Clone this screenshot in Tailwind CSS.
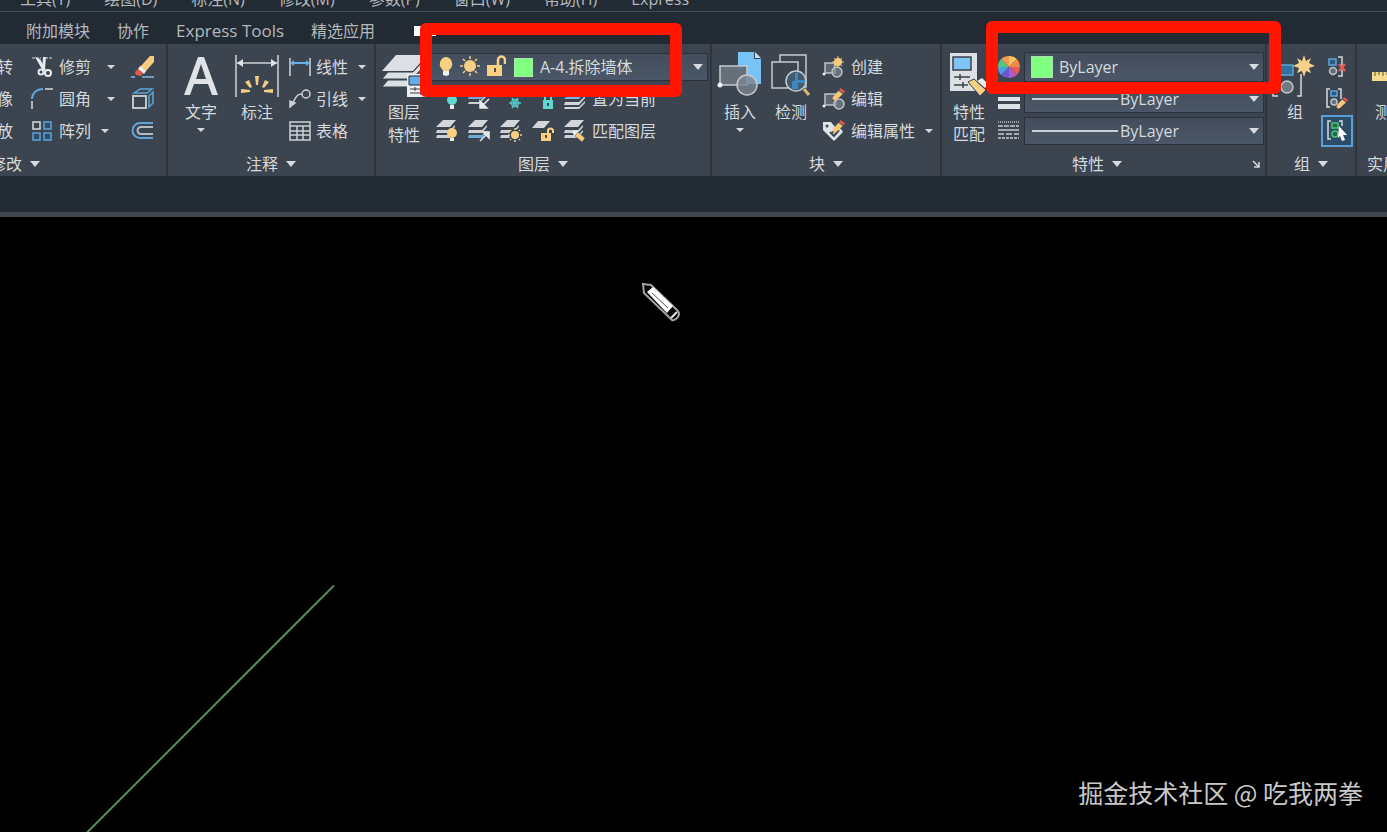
<!DOCTYPE html>
<html lang="zh-CN">
<head>
<meta charset="utf-8">
<meta name="viewport" content="width=device-width, initial-scale=1">
<title>CAD</title>
<script src="https://cdn.jsdelivr.net/npm/@tailwindcss/browser@4"></script>
</head>
<body class="flex h-screen flex-col overflow-hidden bg-black font-['Open_Sans','Noto_Sans_CJK_SC',sans-serif] text-[16px] leading-6 text-[#d6dade]">

<svg class="hidden" aria-hidden="true">
  <symbol id="down" viewBox="0 0 8 4"><path d="M0 0h8L4 4z" fill="#d6dade"/></symbol>
  <symbol id="sheets" viewBox="0 0 24 24">
    <path d="M8 1h13l-6 7H1z" fill="#d3d6da"/>
    <path d="M2 11h13l5-5v2l-5 6H1z" fill="#cdd1d6"/>
    <path d="M2 16h13l5-5v2l-5 6H1z" fill="#cdd1d6"/>
  </symbol>
  <symbol id="sheets-blue" viewBox="0 0 24 24">
    <path d="M8 1h13l-6 7H1z" fill="#d3d6da"/>
    <path d="M2 11h13l5-5v2l-5 6H1z" fill="#cdd1d6"/>
    <path d="M2 16h13l5-5v2l-5 6H1z" fill="#6fa9d8"/>
  </symbol>
  <symbol id="pencil" viewBox="0 0 12 12">
    <path d="M8 0l4 3-1.500 2-4-3z" fill="#e0574b"/><path d="M6 2.500l4 3L4 11 0 12l1-4z" fill="#f4c877"/><path d="M0 12l.5-2 1.500 1.500z" fill="#333"/>
  </symbol>
</svg>

<nav aria-label="菜单" class="flex h-3 shrink-0 items-end gap-[34px] overflow-hidden border-b border-[#414a53] bg-[#222a33] pl-5 whitespace-nowrap text-[#b4b9be]">
  <a href="#">工具(T)</a><a href="#">绘图(D)</a><a href="#">标注(N)</a><a href="#">修改(M)</a><a href="#">参数(P)</a><a href="#">窗口(W)</a><a href="#">帮助(H)</a><a href="#">Express</a>
</nav>

<nav aria-label="功能区选项卡" class="flex h-8 shrink-0 items-center gap-[27px] overflow-hidden bg-[#222a33] pt-1.5 pl-[26px] whitespace-nowrap text-[#b4b9be]">
  <a href="#">附加模块</a><a href="#">协作</a><a href="#" class="text-[17px]">Express Tools</a><a href="#">精选应用</a>
  <button aria-label="最小化功能区" class="ml-3 h-2.5 w-[22px] bg-white"></button>
</nav>

<main class="flex min-h-0 flex-1 flex-col">
<div class="flex h-[132px] shrink-0 overflow-hidden bg-[#3b444f] whitespace-nowrap">

  <section class="flex w-[168px] shrink-0 flex-col border-r-2 border-[#2e353f] pt-[7px]">
    <div class="flex">
      <div class="flex w-[13px] flex-col items-end overflow-hidden *:h-8">
        <button>旋转</button><button>镜像</button><button>缩放</button>
      </div>
      <div class="ml-[18px] flex flex-col">
        <div class="flex h-8 items-center">
          <button class="flex items-center gap-1"><svg class="size-6" viewBox="0 0 24 24" fill="none"><path d="M1 3h9M14 3h8" stroke="#d6dade" stroke-dasharray="3 1"/><path d="M4 2l5 2 6 11-3 1z" fill="#e8ebee"/><path d="M12 2h3l-1 12-3 2z" fill="#e8ebee"/><circle cx="10" cy="17" r="2.500" stroke="#e8ebee" stroke-width="2"/><circle cx="17" cy="18" r="3" stroke="#e8ebee" stroke-width="2"/></svg>修剪</button>
          <button aria-label="修剪选项" class="ml-4"><svg class="h-1 w-2"><use href="#down"/></svg></button>
        </div>
        <div class="flex h-8 items-center">
          <button class="flex items-center gap-1"><svg class="size-6" viewBox="0 0 24 24" fill="none"><path d="M1 12C1 6 6 2 12 2" stroke="#5fa4d8" stroke-width="2"/><path d="M14 2h8M1 14v8" stroke="#d6dade" stroke-width="1.500"/></svg>圆角</button>
          <button aria-label="圆角选项" class="ml-4"><svg class="h-1 w-2"><use href="#down"/></svg></button>
        </div>
        <div class="flex h-8 items-center">
          <button class="flex items-center gap-1"><svg class="size-6" viewBox="0 0 24 24" fill="none" stroke-width="1.500"><path d="M2 3h7v7H2z" stroke="#d6dade"/><path d="M13 3h7v7h-7zM2 14h7v7H2zM13 14h7v7h-7z" stroke="#5fa4d8" fill="#2d4d68"/></svg>阵列</button>
          <button aria-label="阵列选项" class="ml-2.5"><svg class="h-1 w-2"><use href="#down"/></svg></button>
        </div>
      </div>
      <div class="ml-4 flex flex-col *:flex *:h-8 *:items-center">
        <button aria-label="删除"><svg class="size-6" viewBox="0 0 24 24"><path d="M23 1v6L14 17l-5-5L19 1z" fill="#f6cd7e"/><path d="M9 11l6 5-2 3-6-5z" fill="#eceef0"/><path d="M7 14l5 4-2 3-5-1-1-3z" fill="#e05a4b"/><path d="M0 22h4M11 22h12" stroke="#8dbbe0" stroke-width="1.500"/></svg></button>
        <button aria-label="分解"><svg class="size-6" viewBox="0 0 24 24" fill="none" stroke-width="2"><path d="M2 9h13v12H2z" stroke="#bfc4ca"/><path d="M3 6l6-4h12l-5 4zM18 9l4-4v11l-4 4z" stroke="#5fa4d8" stroke-width="1.500"/></svg></button>
        <button aria-label="偏移"><svg class="size-6" viewBox="0 0 24 24" fill="none" stroke-width="2"><path d="M22 4H9a7.500 7.500 0 0 0 0 15h13" stroke="#5fa4d8"/><path d="M22 8H10a3.500 3.500 0 0 0 0 7h12" stroke="#b4bcc6"/></svg></button>
      </div>
    </div>
    <button class="flex h-[29px] items-center gap-2 pt-1"><span class="flex w-[22px] justify-end overflow-hidden">修改</span><svg class="h-1.5 w-2.5" viewBox="0 0 8 4" preserveAspectRatio="none"><path d="M0 0h8L4 4z" fill="#d6dade"/></svg></button>
  </section>

  <section class="flex w-52 shrink-0 flex-col border-r-2 border-[#2e353f] pt-[7px]">
    <div class="flex h-24">
      <button class="ml-[9px] flex w-12 flex-col items-center"><svg class="h-[49px] w-12" viewBox="0 0 48 49"><path d="M7 44L21 6h6l14 38h-6l-4-11H17l-4 11zM19 28h10L24 13z" fill="#dfe2e6" fill-rule="evenodd"/></svg>文字<svg class="mt-1 h-1 w-2"><use href="#down"/></svg></button>
      <button class="ml-2 flex w-12 flex-col items-center"><svg class="h-[49px] w-12" viewBox="0 0 48 49"><path d="M3 4v42M45 4v42M4 12h40" stroke="#cdd2d8" stroke-width="1.500"/><path d="M4 12l6-4v8zM44 12l-6-4v8z" fill="#dfe2e6"/><path d="M22 25h4l-1 9h-2zM32 29l4 2-5 6-2-1zM16 29l-4 2 5 6 2-1zM8 38l9 1v2l-9 1zM40 38l-9 1v2l9 1z" fill="#f5cd7f"/></svg>标注</button>
      <div class="ml-[7px] flex flex-col *:flex *:h-8 *:items-center">
        <div><button class="flex items-center gap-1"><svg class="size-6" viewBox="0 0 24 24"><path d="M2 3v18M22 3v18" stroke="#cdd2d8" stroke-width="1.500"/><path d="M3 8h18" stroke="#6aaee4" stroke-width="2"/><path d="M2 8l4-3v6zM22 8l-4-3v6z" fill="#6aaee4"/></svg>线性</button><button aria-label="线性选项" class="ml-2.5"><svg class="h-1 w-2"><use href="#down"/></svg></button></div>
        <div><button class="flex items-center gap-1"><svg class="size-6" viewBox="0 0 24 24" fill="none" stroke="#cdd2d8" stroke-width="1.500"><circle cx="18" cy="7" r="4"/><path d="M14 7C8 7 8 11 4 17"/><path d="M2 20v-6l5 2z" fill="#cdd2d8"/></svg>引线</button><button aria-label="引线选项" class="ml-2.5"><svg class="h-1 w-2"><use href="#down"/></svg></button></div>
        <button class="gap-1"><svg class="size-6" viewBox="0 0 24 24" fill="none" stroke="#cdd2d8" stroke-width="1.500"><path d="M2 3h20v18H2zM2 7h20M2 12h20M2 16h20M9 7v14M15 7v14"/></svg>表格</button>
      </div>
    </div>
    <button class="flex h-[29px] items-center justify-center gap-2 pt-1">注释<svg class="h-1.5 w-2.5" viewBox="0 0 8 4" preserveAspectRatio="none"><path d="M0 0h8L4 4z" fill="#d6dade"/></svg></button>
  </section>

  <section class="flex w-[336px] shrink-0 flex-col border-r-2 border-[#2e353f] pt-[7px]">
    <div class="flex h-24">
      <button class="ml-1 flex w-12 flex-col items-center leading-[23px]"><svg class="h-[50px] w-12" viewBox="0 0 48 50"><path d="M16 4h31L33 20H2z" fill="#dcdfe3"/><path d="M8 21h25l13-14v6L32 28H2z" fill="#dcdfe3" stroke="#3b444f"/><path d="M8 29h25l13-14v6L32 36H2z" fill="#dcdfe3" stroke="#3b444f"/><path d="M27 23h20v23H27z" fill="#eceef0"/><path d="M29 25h18v9H29z" fill="#62ade9" stroke="#222a33"/><path d="M30 38h15M30 42h15M35 36v4M41 40v4" stroke="#39424d"/></svg>图层<br>特性</button>
      <div class="ml-[3px] flex flex-col">
        <div class="flex h-8 items-center">
          <div class="flex h-7 w-[277px] items-center border border-[#2b323b] bg-linear-to-b from-[#434d5c] to-[#4b5768] pr-1 pl-1.5">
            <svg class="h-6 w-4" viewBox="0 0 16 24"><path d="M8 2a7 7 0 0 1 4 12l-2 3H6l-2-3A7 7 0 0 1 8 2z" fill="#f8d083"/><path d="M5 16h6v4l-3 1-3-1z" fill="#f1f2f3"/></svg>
            <svg class="ml-1.5 h-6 w-5" viewBox="0 0 20 24"><circle cx="10" cy="11" r="6" fill="#f8d083"/><path d="M10 1v3M10 18v3M0 11h3M17 11h3M3 4l2 2M15 16l2 2M17 4l-2 2M5 16l-2 2" stroke="#f8d083" stroke-width="1.500"/></svg>
            <svg class="ml-1.5 h-6 w-5" viewBox="0 0 20 24"><path d="M1 10h15v11H1z" fill="#f8d083"/><path d="M12 10V5a3 3 0 0 1 7 0v4" fill="none" stroke="#f8d083" stroke-width="2.500"/><path d="M8 13h2v4H8z" fill="#584c36"/></svg>
            <span class="ml-2 size-[19px] border border-[#a5eaa5] bg-[#80ff80]"></span>
            <select aria-label="图层" class="ml-[7px] min-w-0 flex-1 appearance-none bg-transparent leading-6 outline-none"><option>A-4.拆除墙体</option></select>
            <svg class="h-1.5 w-2.5 shrink-0" viewBox="0 0 8 4" preserveAspectRatio="none"><path d="M0 0h8L4 4z" fill="#d6dade"/></svg>
          </div>
        </div>
        <div class="ml-1 flex h-8 items-center gap-2">
          <button aria-label="关闭图层"><svg class="size-6" viewBox="0 0 24 24"><use href="#sheets" height="12"/><circle cx="17" cy="13" r="5" fill="#61d7d2"/><path d="M15 18h4v4h-4z" fill="#e8ebee"/></svg></button>
          <button aria-label="隔离"><svg class="size-6" viewBox="0 0 24 24"><path d="M2 9h14l5-5v2l-6 6H1z" fill="#6fa9d8"/><path d="M2 15h10l9-9v2l-9 9H1z" fill="#cdd1d6"/><path d="M22 12l-7 7M13 14v7h7z" stroke="#e8ebee" stroke-width="1.500" fill="#e8ebee"/></svg></button>
          <button aria-label="冻结"><svg class="size-6" viewBox="0 0 24 24" stroke="#56c8c5" stroke-width="1.500" fill="none"><path d="M10 16h12M13 11l6 10M19 11l-6 10"/><circle cx="16" cy="16" r="3.500"/></svg></button>
          <button aria-label="锁定"><svg class="size-6" viewBox="0 0 24 24"><path d="M12 13h10v9H12z" fill="#61d7d2"/><path d="M14 13v-3a3 3 0 0 1 6 0v3" fill="none" stroke="#61d7d2" stroke-width="2"/><path d="M16 16h2v3h-2z" fill="#27515a"/></svg></button>
          <button class="flex items-center gap-[5px]"><svg class="size-6" viewBox="0 0 24 24"><path d="M8 6h14l-6 6H1z" fill="#74b5ea"/><path d="M2 15h14l6-6v2l-6 7H1z" fill="#d3d6da"/><path d="M2 20h14l6-6v2l-6 6H1z" fill="#d3d6da"/></svg>置为当前</button>
        </div>
        <div class="ml-1 flex h-8 items-center gap-2">
          <button aria-label="打开所有图层"><svg class="size-6" viewBox="0 0 24 24"><use href="#sheets"/><circle cx="17" cy="14" r="5" fill="#f8d083"/><path d="M15 19h4v3h-4z" fill="#e8ebee"/></svg></button>
          <button aria-label="取消隔离"><svg class="size-6" viewBox="0 0 24 24"><use href="#sheets-blue"/><path d="M13 22l7-7M16 13h6v6z" stroke="#e8ebee" stroke-width="1.500" fill="#e8ebee"/></svg></button>
          <button aria-label="解冻所有图层"><svg class="size-6" viewBox="0 0 24 24"><use href="#sheets"/><circle cx="16" cy="16" r="6" fill="#3b444f"/><circle cx="16" cy="16" r="4" fill="#f8d083"/><path d="M16 9v2M16 21v2M9 16h2M21 16h2M11 11l1 1M20 20l1 1M21 11l-1 1M12 20l-1 1" stroke="#f8d083" stroke-width="1.500"/></svg></button>
          <button aria-label="解锁"><svg class="size-6" viewBox="0 0 24 24"><path d="M7 2h12l-6 7H1z" fill="#d3d6da"/><path d="M10 14h10v8H10z" fill="#f8d083"/><path d="M17 14v-2a2.500 2.500 0 0 1 5 0v2" fill="none" stroke="#f8d083" stroke-width="2"/><path d="M14 16h2v3h-2z" fill="#584c36"/></svg></button>
          <button class="flex items-center gap-[5px]"><svg class="size-6" viewBox="0 0 24 24"><use href="#sheets"/><path d="M9 13l4-2 3 3-4 4z" fill="#eceef0"/><path d="M15 13l7 6-3 4-7-6z" fill="#f3cf7c" stroke="#3b444f" stroke-width=".5"/></svg>匹配图层</button>
        </div>
      </div>
    </div>
    <button class="flex h-[29px] items-center justify-center gap-2 pt-1">图层<svg class="h-1.5 w-2.5" viewBox="0 0 8 4" preserveAspectRatio="none"><path d="M0 0h8L4 4z" fill="#d6dade"/></svg></button>
  </section>

  <section class="flex w-[230px] shrink-0 flex-col border-r-2 border-[#2e353f] pt-[7px]">
    <div class="flex h-24">
      <button class="ml-1 flex w-12 flex-col items-center"><svg class="h-[49px] w-12" viewBox="0 0 48 49"><path d="M22 1h16v7h7v25H22z" fill="#78c3f5"/><path d="M39 1l6 6h-6z" fill="#bfe2fa"/><path d="M4 15h27v19H4z" fill="#66707b" stroke="#c5cad0" stroke-width="1.500"/><circle cx="31" cy="34" r="10" fill="#7d858e" fill-opacity=".8" stroke="#c5cad0" stroke-width="1.500"/><circle cx="4" cy="34" r="2.500" fill="#eceef0"/></svg>插入<svg class="mt-1 h-1 w-2"><use href="#down"/></svg></button>
      <button class="ml-[3px] flex w-12 flex-col items-center"><svg class="h-[49px] w-12" viewBox="0 0 48 49"><path d="M13 4h26v32H13z" fill="none" stroke="#c5cad0" stroke-width="1.500"/><path d="M5 11h26v26H5z" fill="#3b444f" stroke="#c5cad0" stroke-width="1.500"/><path d="M37 38l5 6" stroke="#d9b774" stroke-width="3"/><circle cx="29" cy="30" r="10" fill="#43596d" stroke="#c5cad0" stroke-width="1.500"/><path d="M28 22h3v7h7v3h-7v6h-6v-8h3z" fill="#3b87c3"/></svg>检测</button>
      <div class="ml-[7px] flex flex-col *:flex *:h-8 *:items-center">
        <button class="gap-[5px]"><svg class="size-6" viewBox="0 0 24 24"><path d="M3 8h10v10H3z" fill="#5d6671" stroke="#bfc4ca" stroke-width="1.500"/><circle cx="15" cy="17" r="5" fill="#7d858e" fill-opacity=".7" stroke="#bfc4ca" stroke-width="1.500"/><circle cx="2" cy="19" r="1.500" fill="#eceef0"/><circle cx="16" cy="7" r="4" fill="#f5cd7f"/><path d="M16 1v12M10 7h12M12 3l8 8M20 3l-8 8" stroke="#f5cd7f"/></svg>创建</button>
        <button class="gap-[5px]"><svg class="size-6" viewBox="0 0 24 24"><path d="M3 7h11v11H3z" fill="#5d6671" stroke="#bfc4ca" stroke-width="1.500"/><circle cx="17" cy="17" r="5" fill="#7d858e" fill-opacity=".7" stroke="#bfc4ca" stroke-width="1.500"/><circle cx="2" cy="19" r="1.500" fill="#eceef0"/><use href="#pencil" x="10" y="1" width="13" height="13"/></svg>编辑</button>
        <div><button class="flex items-center gap-[5px]"><svg class="size-6" viewBox="0 0 24 24"><path d="M1 3h8l4 5 6 2 2 3-9 9L1 11z" fill="#e1e4e7"/><circle cx="5" cy="7" r="1.500" fill="#3b444f"/><path d="M8 13l4 4 5-6" stroke="#3b444f" stroke-width="2" fill="none"/><use href="#pencil" x="10" y="1" width="13" height="13"/></svg>编辑属性</button><button aria-label="编辑属性选项" class="ml-2.5"><svg class="h-1 w-2"><use href="#down"/></svg></button></div>
      </div>
    </div>
    <button class="flex h-[29px] items-center justify-center gap-2 pt-1">块<svg class="h-1.5 w-2.5" viewBox="0 0 8 4" preserveAspectRatio="none"><path d="M0 0h8L4 4z" fill="#d6dade"/></svg></button>
  </section>

  <section class="flex w-[325px] shrink-0 flex-col border-r-2 border-[#2e353f] pt-[7px]">
    <div class="flex h-24">
      <button class="ml-[3px] flex w-12 flex-col items-center leading-[22px]"><svg class="h-[50px] w-12" viewBox="0 0 48 50"><path d="M5 2h27v38H5z" fill="#dcdfe3"/><path d="M8 6h18v13H8z" fill="#7ec4f4" stroke="#39424d" stroke-width="1.500"/><path d="M9 26h16M9 34h14M15 23v6M18 31v6" stroke="#39424d" stroke-width="1.500"/><path d="M32 30l5-3 6 6-3 4z" fill="#eceef0"/><path d="M23 31l6-3 12 11-6 6z" fill="#f5d283" stroke="#39424d"/></svg>特性<br>匹配</button>
      <div class="ml-1 flex flex-col">
        <div class="flex h-8 items-center gap-[3px]">
          <svg class="size-6" viewBox="0 0 24 24"><path d="M12 12L12 1A11 11 0 0 1 20 4z" fill="#f8c35c"/><path d="M12 12l8-8a11 11 0 0 1 3 8z" fill="#f08a4b"/><path d="M12 12h11a11 11 0 0 1-3 8z" fill="#e65b57"/><path d="M12 12l8 8a11 11 0 0 1-8 3z" fill="#b45bc0"/><path d="M12 12v11a11 11 0 0 1-8-3z" fill="#6d52d6"/><path d="M12 12l-8 8a11 11 0 0 1-3-8z" fill="#4e9de0"/><path d="M12 12H1a11 11 0 0 1 3-8z" fill="#55c47b"/><path d="M12 12L4 4a11 11 0 0 1 8-3z" fill="#f39a50"/></svg>
          <div class="flex h-[30px] w-60 items-center border border-[#2b323b] bg-linear-to-b from-[#434d5c] to-[#4b5768] pr-1 pl-1.5">
            <span class="size-[22px] border border-[#b0e0b0] bg-[#80ff80]"></span>
            <select aria-label="对象颜色" class="ml-1.5 min-w-0 flex-1 appearance-none bg-transparent leading-6 outline-none"><option>ByLayer</option></select>
            <svg class="h-1.5 w-2.5 shrink-0" viewBox="0 0 8 4" preserveAspectRatio="none"><path d="M0 0h8L4 4z" fill="#d6dade"/></svg>
          </div>
        </div>
        <div class="flex h-8 items-center gap-[3px]">
          <svg class="size-6" viewBox="0 0 24 24"><path d="M1 4h22v2H1zM1 10h22v4H1zM1 17h22v5H1z" fill="#dfe2e6"/></svg>
          <div class="flex h-7 w-60 items-center border border-[#2b323b] bg-linear-to-b from-[#434d5c] to-[#4b5768] pr-1 pl-[7px]">
            <span class="h-0.5 w-[86px] bg-[#c9ced4]"></span>
            <select aria-label="线宽" class="ml-0.5 min-w-0 flex-1 appearance-none bg-transparent leading-6 outline-none"><option>ByLayer</option></select>
            <svg class="h-1.5 w-2.5 shrink-0" viewBox="0 0 8 4" preserveAspectRatio="none"><path d="M0 0h8L4 4z" fill="#d6dade"/></svg>
          </div>
        </div>
        <div class="flex h-8 items-center gap-[3px]">
          <svg class="size-6" viewBox="0 0 24 24" stroke="#c5cad0" stroke-width="1.500"><path d="M1 3h21" stroke-dasharray="1 1"/><path d="M1 7h21" stroke-dasharray="5 1"/><path d="M1 11h21"/><path d="M1 15h21" stroke-dasharray="6 2"/><path d="M1 19h21" stroke-dasharray="3 1"/></svg>
          <div class="flex h-7 w-60 items-center border border-[#2b323b] bg-linear-to-b from-[#434d5c] to-[#4b5768] pr-1 pl-[7px]">
            <span class="h-0.5 w-[86px] bg-[#c9ced4]"></span>
            <select aria-label="线型" class="ml-0.5 min-w-0 flex-1 appearance-none bg-transparent leading-6 outline-none"><option>ByLayer</option></select>
            <svg class="h-1.5 w-2.5 shrink-0" viewBox="0 0 8 4" preserveAspectRatio="none"><path d="M0 0h8L4 4z" fill="#d6dade"/></svg>
          </div>
        </div>
      </div>
    </div>
    <div class="flex h-[29px] items-center pt-1 pr-[5px]">
      <button class="flex flex-1 items-center justify-center gap-2">特性<svg class="h-1.5 w-2.5" viewBox="0 0 8 4" preserveAspectRatio="none"><path d="M0 0h8L4 4z" fill="#d6dade"/></svg></button>
      <button aria-label="特性面板"><svg class="size-2" viewBox="0 0 8 8"><path d="M1 1l5 5M7 2v5H2" stroke="#d6dade" stroke-width="1.500" fill="none"/></svg></button>
    </div>
  </section>

  <section class="flex w-[90px] shrink-0 flex-col border-r-2 border-[#2e353f] pt-[7px]">
    <div class="flex h-24">
      <button class="ml-1 flex w-12 flex-col items-center"><svg class="h-[49px] w-12" viewBox="0 0 48 49"><path d="M6 12H2v33h5M26 45h4V23" stroke="#d6dade" stroke-width="1.500" fill="none"/><path d="M9 14h13v10H9z" fill="#33719f" stroke="#5fa4d8" stroke-width="1.500"/><circle cx="16" cy="36" r="6" fill="#727a84" stroke="#bfc4ca" stroke-width="1.500"/><path d="M33 4l2 6 5-3-2 5 6 3-6 2 2 5-5-2-2 6-2-6-5 2 2-5-6-2 6-3-2-5 5 3z" fill="#f5d08a"/></svg>组</button>
      <div class="flex flex-1 flex-col items-end pr-0.5 *:flex *:h-8 *:w-8 *:items-center *:justify-center">
        <button aria-label="解除编组"><svg class="size-6" viewBox="0 0 24 24" fill="none" stroke-width="1.500"><path d="M13 2h4v19h-4" stroke="#d6dade"/><path d="M4 4h7v6H4z" stroke="#5fa4d8" fill="#2d5b80"/><circle cx="8" cy="16" r="3.500" stroke="#bfc4ca" fill="#66707b"/><path d="M14 9l6 7M20 9l-6 7" stroke="#e05a5a" stroke-width="2.500"/></svg></button>
        <button aria-label="组编辑"><svg class="size-6" viewBox="0 0 24 24" fill="none" stroke-width="1.500"><path d="M5 2H2v18h3M13 2h3v10" stroke="#d6dade"/><path d="M6 4h6v5H6z" stroke="#5fa4d8" fill="#2d5b80"/><circle cx="9" cy="15" r="3" stroke="#bfc4ca" fill="#66707b"/><g stroke="none"><use href="#pencil" x="11" y="10" width="12" height="12"/></g></svg></button>
        <button aria-label="启用/禁用组选择" aria-pressed="true" class="border-2 border-[#5c9fd6] bg-[#2c4c67]"><svg class="size-6 shrink-0" viewBox="0 0 24 24" fill="none" stroke-width="1.500"><path d="M6 2H3v18h3M14 2h3v5" stroke="#d6dade"/><path d="M7 4h6v5H7zM13 15a3 3 0 1 1-6 0 3 3 0 0 1 6 0z" stroke="#45c878" fill="#276449"/><path d="M14 7l8 9h-4l2 5-3 1-2-5-2 2z" fill="#fff"/></svg></button>
      </div>
    </div>
    <button class="flex h-[29px] items-center justify-center gap-2 pt-1">组<svg class="h-1.5 w-2.5" viewBox="0 0 8 4" preserveAspectRatio="none"><path d="M0 0h8L4 4z" fill="#d6dade"/></svg></button>
  </section>

  <section class="flex min-w-0 flex-1 flex-col overflow-hidden pt-[7px] pl-2.5">
    <button class="flex h-24 w-12 shrink-0 flex-col items-center"><svg class="h-[49px] w-12" viewBox="0 0 48 49"><path d="M5 21h42v9H5z" fill="#f5dc8c"/><path d="M8 21v4M12 21v3M16 21v4M20 21v3M24 21v4" stroke="#5b5238"/></svg>测量</button>
    <button class="flex h-[29px] items-center pt-1">实用工具</button>
  </section>
</div>

<div class="h-9 shrink-0 bg-[#222a33]"></div>
<div class="h-[5px] shrink-0 bg-[#40454c]"></div>

<div class="relative min-h-0 flex-1 overflow-hidden bg-black">
  <svg class="absolute inset-0 size-full" aria-label="绘图区">
    <path d="M334 368.500L86 616.500" stroke="#578c55" stroke-width="2"/>
    <g fill="none" stroke="#a2a2a2" stroke-width="2">
      <path d="M643 67l8 1 27 26c3 4-2 10-6 9l-28-27z" fill="#050505"/>
      <path d="M647 75l6-5 20 19-6 7z" fill="#fff" stroke="none"/>
      <path d="M652 76l16 15" stroke="#555" stroke-width="1"/>
      <path d="M671 101l6-6" stroke="#e8e8e8"/>
    </g>
  </svg>
  <p class="absolute right-6 bottom-[22px] font-['Noto_Sans_CJK_SC',sans-serif] text-[25px] leading-9 text-[#c9c9c9]">掘金技术社区 @ 吃我两拳</p>
</div>
</main>

<div class="pointer-events-none absolute top-[23px] left-[420px] h-[74px] w-[262px] rounded-md border-12 border-[#ff1500]"></div>
<div class="pointer-events-none absolute top-[21px] left-[986px] h-[73px] w-[295px] rounded-md border-12 border-[#ff1500]"></div>
</body>
</html>
